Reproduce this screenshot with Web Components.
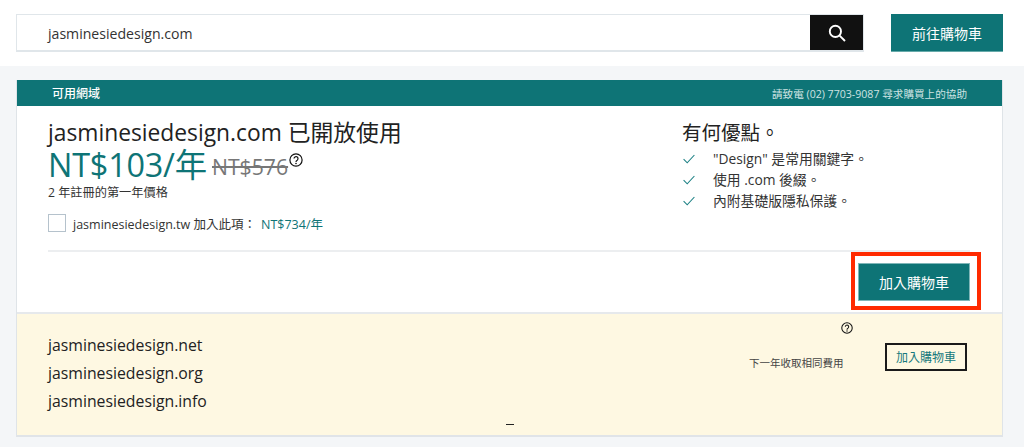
<!DOCTYPE html>
<html lang="zh-Hant"><head><meta charset="utf-8"><style>
html,body{margin:0;padding:0;background:#f4f6f8;overflow:hidden}
body{width:1024px;height:447px;font-family:"Open Sans","Noto Sans CJK TC",sans-serif;color:#222}
</style></head><body>
<app-page></app-page>
<script>
const def=(n,html)=>{customElements.define(n,class extends HTMLElement{constructor(){super();const s=this.attachShadow({mode:'open'});s.innerHTML=html;}})};
const Q='<svg viewBox="0 0 14 14" fill="none" stroke="#111" style="display:block;width:100%;height:100%"><circle cx="7" cy="7" r="6.1" stroke-width="1.2"/><path d="M5 5.6a2 2 0 1 1 3.2 1.6c-.8.5-1.2.9-1.2 1.7" stroke-width="1.2"/><circle cx="7" cy="10.5" r=".8" fill="#111" stroke="none"/></svg>';
def('help-icon',`<style>:host{display:block;width:14px;height:14px}</style>${Q}`);
def('search-bar',`<style>
:host{display:flex;height:66px;box-sizing:border-box;padding:14px 21px 14px 16px;background:#fff;gap:27px}
.box{flex:1;display:flex;border:1px solid #e0e6ea;border-bottom-width:2px;box-sizing:border-box;height:38px}
.t{flex:1;padding-left:31px;font-size:14.1px;line-height:38px;color:#333}
.b{width:53px;background:#111;display:flex;align-items:center;justify-content:center}
.c{width:112px;height:38px;background:#0e7476;color:#fff;font-size:14px;display:flex;align-items:center;justify-content:center;box-sizing:border-box;border-bottom:1px solid #6aa}
</style><div class="box"><div class="t">jasminesiedesign.com</div><div class="b">
<svg width="18" height="18" viewBox="0 0 18 18" fill="none" stroke="#fff"><circle cx="7.4" cy="7.4" r="5.6" stroke-width="1.9"/><path d="M11.6 11.6l5.4 5.4" stroke-width="1.9"/></svg></div></div><div class="c">前往購物車</div>`);
def('check-item',`<style>:host{display:flex;align-items:center;height:21px;font-size:13.8px;color:#333}
svg{width:12px;height:10px;margin:2px 18px 0 1px;flex:none}</style>
<svg viewBox="0 0 12 10" fill="none" stroke="#1c8084" stroke-width="1.1"><path d="M.6 5.2l3.6 3.6L11.4 1"/></svg><span><slot></slot></span>`);
def('domain-row',`<style>:host{display:block;font-size:15.8px;line-height:28px;color:#222}</style><slot></slot>`);
def('main-offer',`<style>
:host{display:block;background:#fff;height:208px;box-sizing:border-box;position:relative;border-bottom:2px solid #e6e9ec}
.top{display:flex;padding:14px 32px 0 31px;height:144px;box-sizing:border-box}
.l{flex:1}
.r{width:288px}
h2{margin:0;font-weight:400;font-size:22.8px;line-height:26px;color:#222}
.r h2{font-size:19.5px;margin-bottom:1px}
.p{display:flex;align-items:flex-start;height:36px;margin-top:-1px}
.n{font-size:32.4px;line-height:38px;color:#0e7476;letter-spacing:-.2px}
.s{font-size:21.2px;line-height:38px;color:#777;text-decoration:line-through;margin:3px 0 0 5px}
help-icon{margin:8px 0 0 1px}
.y{font-size:12.2px;line-height:16px;color:#333;margin-top:4px}
.a{display:flex;align-items:center;margin-top:13px;font-size:12.5px;color:#333;height:18px}
.a i{width:16px;height:16px;border:1px solid #b5c2cc;margin-right:7px;background:#fff}
.a b{font-weight:400;color:#0e7476;margin-left:5px}
hr{margin:0 32px 0 31px;border:0;height:2px;background:#eceef0}
.act{display:flex;justify-content:flex-end;padding:11px 32px 0 0}
.btn{width:112px;height:38px;background:#0e7476;color:#fff;font-size:14px;display:flex;align-items:center;justify-content:center;border:1px solid #7fb6b8;box-sizing:border-box}
.mark{position:absolute;left:834px;top:146px;width:130px;height:58px;border:4px solid #ff2a00;box-sizing:border-box}
</style><div class="top"><div class="l">
<h2>jasminesiedesign.com 已開放使用</h2>
<div class="p"><span class="n">NT$103/年</span><span class="s">NT$576</span><help-icon></help-icon></div>
<div class="y">2 年註冊的第一年價格</div>
<div class="a"><i></i>jasminesiedesign.tw 加入此項： <b>NT$734/年</b></div>
</div><div class="r"><h2>有何優點。</h2>
<check-item>"Design" 是常用關鍵字。</check-item><check-item>使用 .com 後綴。</check-item><check-item>內附基礎版隱私保護。</check-item></div></div>
<hr><div class="act"><div class="btn">加入購物車</div></div><div class="mark"></div>`);
def('alt-offers',`<style>
:host{display:block;background:#fef8e2;height:121px;position:relative;box-sizing:border-box}
.w{display:flex;padding:17px 35px 0 31px}
.d{flex:1}
.m{width:136px;font-size:10.5px;line-height:14px;color:#444;margin-top:25px}
.h{position:absolute;left:824px;top:8px}
.h help-icon{width:12px;height:12px}
.o{width:82px;height:28px;border:2px solid #1a1a1a;box-sizing:border-box;color:#16787c;font-size:12px;display:flex;align-items:center;justify-content:center;margin-top:12px}
.dash{position:absolute;left:489px;top:110px;width:8px;height:1px;background:#222}
</style><div class="w"><div class="d"><domain-row>jasminesiedesign.net</domain-row><domain-row>jasminesiedesign.org</domain-row><domain-row>jasminesiedesign.info</domain-row></div>
<div class="m">下一年收取相同費用</div><div class="h"><help-icon></help-icon></div><div class="o">加入購物車</div></div><div class="dash"></div>`);
def('result-card',`<style>
:host{display:block;margin:14px 21px 0 16px;border-right:1px solid #dfe4e8;border-left:1px solid #dfe4e8;border-bottom:2px solid #e0e4e8;box-sizing:border-box;height:357px}
.hd{height:26px;background:#0e7476;color:#fff;display:flex;justify-content:space-between;align-items:center;padding:0 35px 0 35px}
.a{font-size:12px;font-weight:500}
.b{font-size:10.6px;color:#cfe3e3}
</style><div class="hd"><span class="a">可用網域</span><span class="b">請致電 (02) 7703-9087 尋求購買上的協助</span></div><main-offer></main-offer><alt-offers></alt-offers>`);
def('app-page',`<style>:host{display:block}</style><search-bar></search-bar><result-card></result-card>`);
</script></body></html>
